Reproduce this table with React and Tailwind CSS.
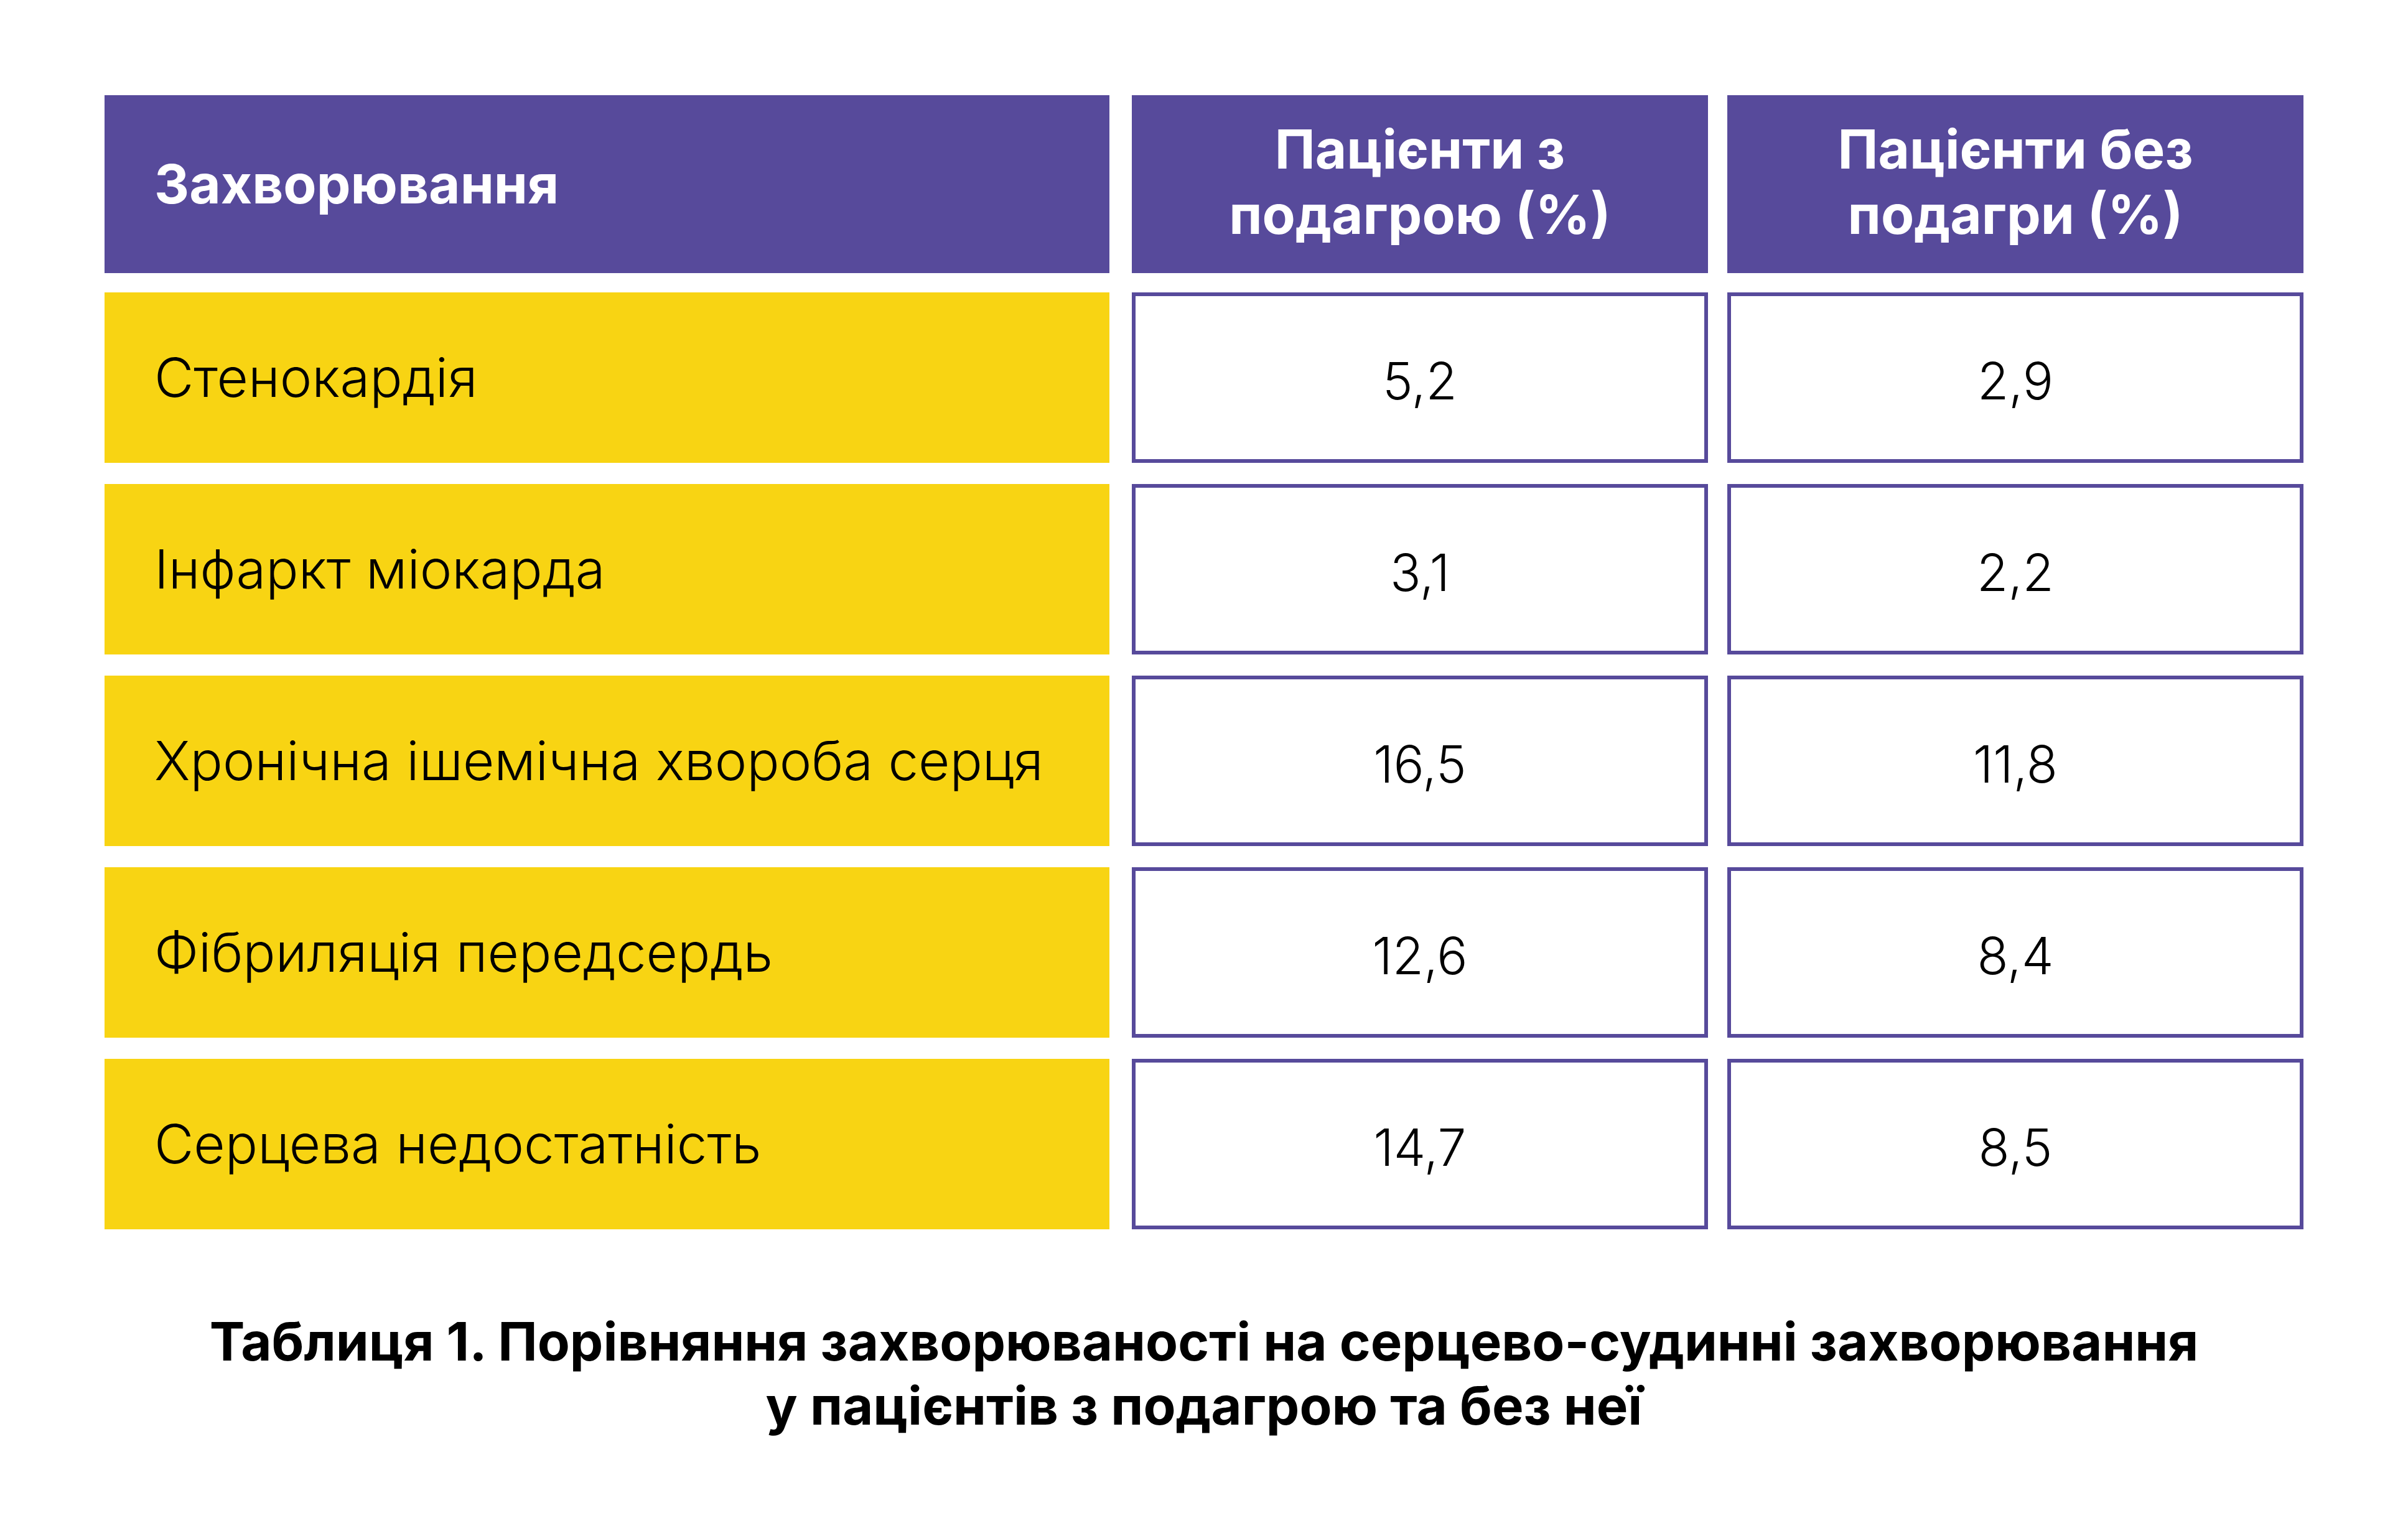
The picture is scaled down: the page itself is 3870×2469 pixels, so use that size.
import React from "react";

const rows = [
  ["Стенокардія", "5,2", "2,9"],
  ["Інфаркт міокарда", "3,1", "2,2"],
  ["Хронічна ішемічна хвороба серця", "16,5", "11,8"],
  ["Фібриляція передсердь", "12,6", "8,4"],
  ["Серцева недостатність", "14,7", "8,5"],
];

export default function App() {
  return (
    <div className="w-[3870px] h-[2469px] bg-white font-['Inter','Noto_Sans',sans-serif] text-black flex flex-col pt-[153px] pl-[168px]">
      {/* header */}
      <div className="flex h-[286px]">
        <div className="w-[1615px] bg-[#574a9b] flex items-center pl-[80px] text-white text-[87px] font-bold">
          Захворювання
        </div>
        <div className="ml-[36px] w-[926px] bg-[#574a9b] flex items-center justify-center text-center pb-[8px] text-white text-[87px] leading-[105px] font-bold">
          Пацієнти з<br />подагрою (%)
        </div>
        <div className="ml-[31px] w-[926px] bg-[#574a9b] flex items-center justify-center text-center pb-[8px] text-white text-[87px] leading-[105px] font-bold">
          Пацієнти без<br />подагри (%)
        </div>
      </div>

      <div className="flex flex-col gap-[34px] mt-[31px]">
        {rows.map(([name, a, b]) => (
          <div key={name} className="flex h-[274px]">
            <div className="w-[1615px] bg-[#f8d413] flex items-center pl-[80px] text-[87px] font-light">
              {name}
            </div>
            <div className="ml-[36px] w-[926px] border-[6px] border-[#574a9b] flex items-center justify-center pt-[10px] text-[82px] font-light">
              {a}
            </div>
            <div className="ml-[31px] w-[926px] border-[6px] border-[#574a9b] flex items-center justify-center pt-[10px] text-[82px] font-light">
              {b}
            </div>
          </div>
        ))}
      </div>

      <p className="mt-[129px] w-[3534px] text-center text-[85px] leading-[103px] font-bold">
        Таблиця 1. Порівняння захворюваності на серцево-судинні захворювання
        <br />у пацієнтів з подагрою та без неї
      </p>
    </div>
  );
}
